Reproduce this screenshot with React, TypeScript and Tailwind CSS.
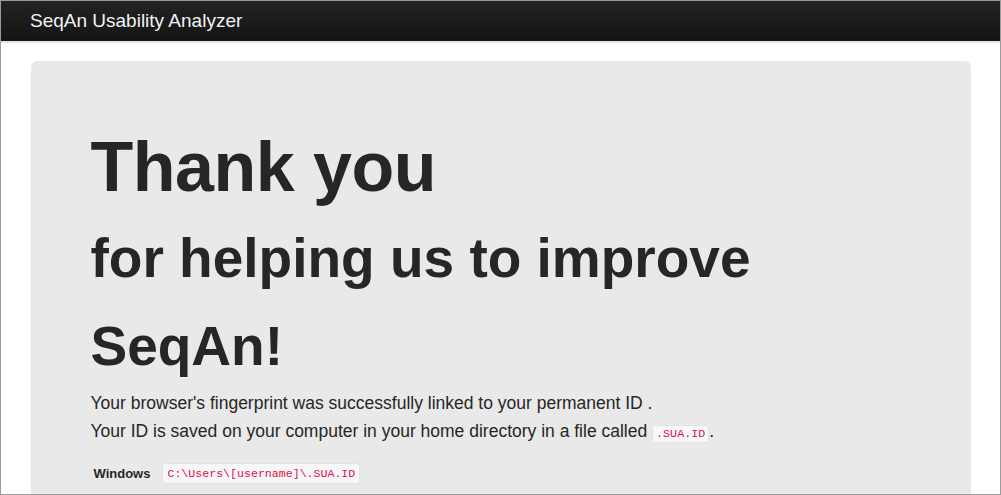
export default function App() {
  return (
    <div className="box-border h-[495px] overflow-hidden border border-[#9b9b9b] bg-white font-['Liberation_Sans',Arial,sans-serif] text-[#262626]">
      <div className="flex h-10 items-center bg-gradient-to-b from-[#232323] to-[#141414] px-[29px]">
        <span className="pt-[1px] text-[19px] text-[#f2f2f2]">SeqAn Usability Analyzer</span>
      </div>
      <div className="h-[2px] bg-[#e4e4e4]" />
      <div className="pt-[18px]">
        <div className="mx-auto w-[940px] rounded-md bg-[#e9e9e9] px-[60px] pt-[71px] pb-10">
          <h1 className="text-[70px] leading-[70px] font-bold tracking-[-0.5px] text-[#262626]">Thank you</h1>
          <h2 className="mt-3 text-[55px] leading-[88px] font-bold text-[#262626]">
            for helping us to improve SeqAn!
          </h2>
          <p className="-mt-[1px] text-[17.5px] leading-[28px]">
            Your browser's fingerprint was successfully linked to your permanent ID .
            <br />
            Your ID is saved on your computer in your home directory in a file called{' '}
            <code className="rounded-[3px] border border-[#e1e1e8] bg-[#f7f7f9] px-[3px] py-[1px] font-['Liberation_Mono',monospace] text-[11.7px] text-[#dd1144]">
              .SUA.ID
            </code>
            .
          </p>
          <div className="mt-[15px] flex items-center gap-[12px] pl-[3px]">
            <span className="text-[13px] font-bold">Windows</span>
            <code className="rounded-[3px] border border-[#e1e1e8] bg-[#f7f7f9] px-1 py-[2px] font-['Liberation_Mono',monospace] text-[11.6px] leading-[15px] text-[#dd1144]">
              C:\Users\[username]\.SUA.ID
            </code>
          </div>
        </div>
      </div>
    </div>
  )
}
